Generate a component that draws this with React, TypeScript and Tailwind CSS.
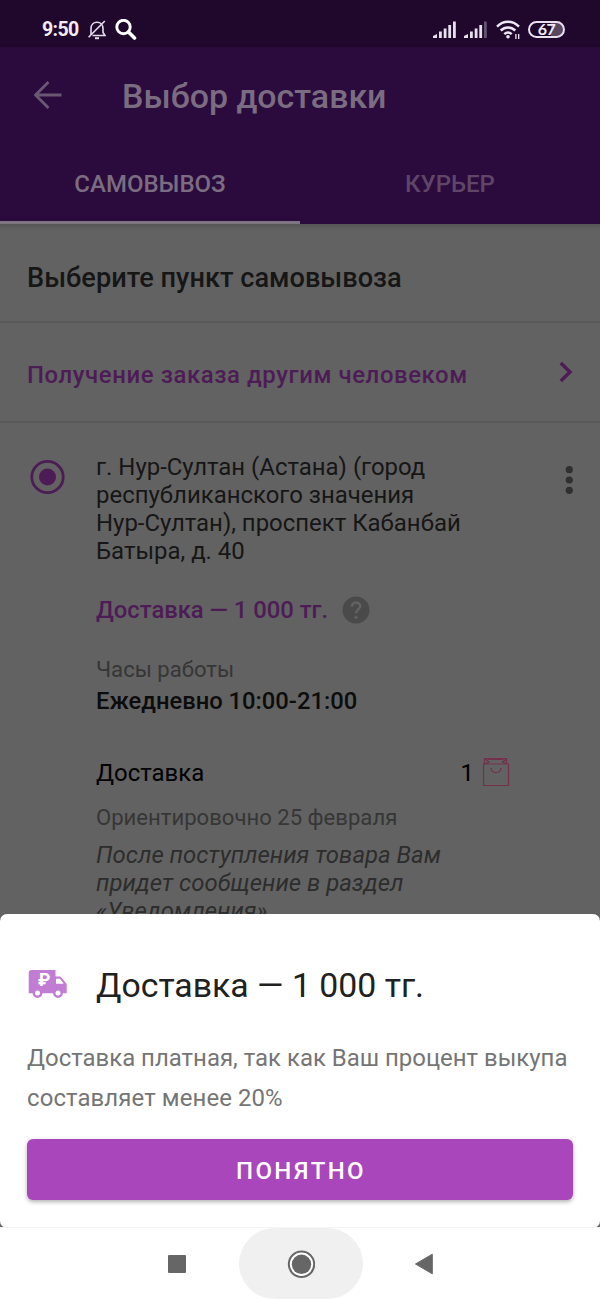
import type { ReactNode } from 'react'

function Line({ className = '', children }: { className?: string; children: ReactNode }) {
  return <div className={`whitespace-nowrap ${className}`}>{children}</div>
}

function Signal({ weak }: { weak?: boolean }) {
  return (
    <svg width="23" height="17" viewBox="0 0 23 17" fill="#e9e0ee">
      <path d="M0 17v-2l4-2v4z" />
      <path d="M6 10.5h2.8V17H6z" />
      <path d="M10.7 7.5h2.8V17h-2.8z" />
      <path d="M15.3 4h2.8v13h-2.8z" />
      <path d="M20 .5h2.8V17H20z" opacity={weak ? 0.35 : 1} />
    </svg>
  )
}

function StatusBar() {
  return (
    <div className="flex h-[47px] shrink-0 items-center bg-[#1f082c] pt-3 pl-[42px] text-[#f3ebf7]">
      <span className="w-[46px] pt-[1px] text-[19.5px] leading-[24px] font-bold tracking-[-0.6px]">9:50</span>
      <svg width="18" height="20" viewBox="0 0 18 20" fill="none" stroke="#e5dcea" strokeWidth="1.6">
        <path d="M3 14.8V8.5C3 4.8 5.5 2.2 9 2.2s6 2.6 6 6.3v4l2 3H4.5" />
        <path d="M.6 17.2L16.8 1" />
        <path d="M7 18.2h4" strokeWidth="2" />
      </svg>
      <svg className="ml-[9px]" width="22" height="22" viewBox="0 0 22 22" fill="none" stroke="#fff">
        <circle cx="8.5" cy="8" r="6.7" strokeWidth="2.9" />
        <path d="M13.5 13l6 6" strokeWidth="3.6" strokeLinecap="round" />
      </svg>
      <div className="ml-[296px] flex items-center">
        <Signal />
        <div className="w-[8px]" />
        <Signal weak />
        <svg className="ml-[9px]" width="25" height="20" viewBox="0 0 25 20" fill="none" stroke="#efe6f3" strokeWidth="2.5">
          <path d="M1 6.6C7.5.2 16.5.2 23 6.6" />
          <path d="M4.7 10.5C9 6.4 15 6.4 19.3 10.5" />
          <path d="M8.3 14.2c2.2-2 5.2-2 7.4 0" />
          <circle cx="12" cy="16.7" r="1.8" fill="#efe6f3" stroke="none" />
          <path d="M19.9 14v5M22.7 14v5" strokeWidth="1.3" />
        </svg>
        <div className="ml-[7px] flex h-[17px] w-[37px] items-center justify-center rounded-full border-2 border-[#e9e0ee] bg-linear-to-r from-[#1f082c] from-65% to-[#5a4863] to-65%">
          <span className="pb-[2px] font-['Lato'] text-[16px] leading-none font-bold tracking-[-0.5px]">67</span>
        </div>
      </div>
    </div>
  )
}

function AppBar() {
  return (
    <header className="flex h-[177px] shrink-0 flex-col bg-[#2b0b3d] text-[#7b6d81]">
      <div className="flex h-[98px] items-center pl-[34px]">
        <svg className="-mt-[2px]" width="28" height="28" viewBox="0 0 28 28" fill="none" stroke="#6a5773" strokeWidth="2.8">
          <path d="M27.5 14h-25M14.5 1l-13 13 13 13" />
        </svg>
        <Line className="ml-[60px] pt-[2px] text-[33.9px] font-medium">Выбор доставки</Line>
      </div>
      <div className="flex flex-1 text-[24px] font-medium">
        <div className="flex w-1/2 items-center justify-center border-b-[3px] border-[#7d7582] pt-[2px]">САМОВЫВОЗ</div>
        <div className="flex w-1/2 items-center justify-center border-b-[3px] border-transparent pt-[2px] text-[#5f4668]">
          КУРЬЕР
        </div>
      </div>
    </header>
  )
}

function BagIcon() {
  return (
    <svg className="-mt-[2px]" width="28" height="30" viewBox="0 0 28 30" fill="none" stroke="#74304a" strokeWidth="1.2">
      <path d="M1.5 7h25v21.5h-25zM2.5 7V1.5h22V7M3 2l4 3-4 2M24.5 2l-4 3 4 2M5.5 2.5h16" />
      <path d="M9 11c.5 6 9.5 6 10 0" />
    </svg>
  )
}

function PickupPoint() {
  return (
    <div className="flex pt-[30px]">
      <svg className="mt-[6px] ml-[29px] shrink-0" width="36" height="36" viewBox="0 0 36 36">
        <circle cx="18.5" cy="18" r="15.7" fill="none" stroke="#4d1c56" strokeWidth="2.8" />
        <circle cx="18.5" cy="18" r="8.5" fill="#4d1c56" />
      </svg>
      <div className="ml-[31px] w-[414px] shrink-0 text-[23.95px]">
        <div className="leading-[28px] text-[#161616]">
          <Line>г. Нур-Султан (Астана) (город</Line>
          <Line>республиканского значения</Line>
          <Line>Нур-Султан), проспект Кабанбай</Line>
          <Line>Батыра, д. 40</Line>
        </div>
        <div className="mt-[30px] flex h-[30px] items-center text-[#4d1c56]">
          <Line className="pt-[2px] text-[23.8px] font-medium">Доставка — 1 000 тг.</Line>
          <svg className="ml-[14px]" width="28" height="28" viewBox="0 0 28 28">
            <circle cx="14" cy="14" r="13.5" fill="#4a4a4a" />
            <path d="M9.8 10.7c0-5.4 8.4-5.4 8.4-.4 0 3.1-4.2 3.2-4.2 7" fill="none" stroke="#626262" strokeWidth="2.5" />
            <circle cx="14" cy="21.3" r="1.6" fill="#626262" />
          </svg>
        </div>
        <Line className="mt-[29px] text-[22.1px] leading-[30px] text-[#363636]">Часы работы</Line>
        <Line className="mt-[2px] text-[23.75px] leading-[30px] font-medium text-[#0c0c0c]">Ежедневно 10:00-21:00</Line>
        <div className="mt-[42px] flex h-[30px] items-center justify-between text-black">
          <Line className="pt-[1px]">Доставка</Line>
          <div className="flex items-center gap-[8px]">
            <span className="pt-[1px]">1</span>
            <BagIcon />
          </div>
        </div>
        <Line className="mt-[14px] text-[22.1px] leading-[30px] text-[#363636]">Ориентировочно 25 февраля</Line>
        <div className="mt-[9px] leading-[28px] text-[#2d2d2d] italic">
          <Line>После поступления товара Вам</Line>
          <Line>придет сообщение в раздел</Line>
          <Line>«Уведомления»</Line>
        </div>
      </div>
      <svg className="mt-[12px] ml-[54px] shrink-0" width="10" height="30" viewBox="0 0 10 30" fill="#303030">
        <circle cx="5.3" cy="4.7" r="3.6" />
        <circle cx="5.3" cy="15" r="3.6" />
        <circle cx="5.3" cy="25.3" r="3.6" />
      </svg>
    </div>
  )
}

function TruckIcon() {
  return (
    <svg className="shrink-0" width="40" height="30" viewBox="0 0 40 30">
      <path d="M5 0h23.5v6.500h5L39.700 14v9.300H1.700V3.300A3.300 3.300 0 0 1 5 0z" fill="#c07dd3" />
      <path d="M29 8.800h4l3.700 5H29z" fill="#fff" />
      <circle cx="10.5" cy="23" r="3.7" fill="#fff" stroke="#c07dd3" strokeWidth="2.4" />
      <circle cx="31" cy="23" r="3.7" fill="#fff" stroke="#c07dd3" strokeWidth="2.4" />
      <text x="17.3" y="16" textAnchor="middle" fill="#fff" fontSize="17.5" fontWeight="700">
        ₽
      </text>
    </svg>
  )
}

function BottomSheet() {
  return (
    <section className="h-[314px] shrink-0 rounded-[7px] bg-white px-[27px] pt-[47px]">
      <div className="flex h-[48px] items-center">
        <TruckIcon />
        <Line className="ml-[29px] pt-[2px] text-[33.8px] text-[#212121]">Доставка — 1 000 тг.</Line>
      </div>
      <div className="mt-[29px] text-[23.95px] leading-[40px] text-[#757575]">
        <Line>Доставка платная, так как Ваш процент выкупа</Line>
        <Line className="tracking-[0.1px]">составляет менее 20%</Line>
      </div>
      <button
        type="button"
        className="mt-[21px] flex h-[61px] w-full items-center justify-center rounded-[6px] bg-[#aa46bc] pt-[3px] pl-[2px] text-[24px] font-medium tracking-[2.4px] text-white shadow-[0_2px_4px_rgba(0,0,0,0.3)]"
      >
        ПОНЯТНО
      </button>
    </section>
  )
}

function NavBar() {
  return (
    <nav className="flex h-[71px] shrink-0 items-center bg-white shadow-[0_-1px_0_#f4f4f4]">
      <div className="ml-[168px] h-[18px] w-[18px] rounded-[1px] bg-[#666]" />
      <div className="ml-[53px] flex h-[71px] w-[124px] items-center justify-center rounded-full bg-[#f0f0f0]">
        <svg width="28" height="28" viewBox="0 0 28 28">
          <circle cx="14.5" cy="14.3" r="12.7" fill="#fff" stroke="#666" strokeWidth="2" />
          <circle cx="14.5" cy="14.3" r="9.7" fill="#666" />
        </svg>
      </div>
      <svg className="ml-[51px]" width="20" height="22" viewBox="0 0 20 22" fill="#666">
        <path d="M18.3 1.2v19.6L1.5 11z" stroke="#666" strokeLinejoin="round" />
      </svg>
    </nav>
  )
}

export default function App() {
  return (
    <div className="flex h-[1299px] w-[600px] flex-col overflow-hidden bg-[#626262] font-['Roboto',sans-serif]">
      <StatusBar />
      <AppBar />
      <main className="h-[690px] shrink-0 overflow-hidden bg-linear-to-b from-[#555] to-[#626262] to-[6px]">
        <div className="flex h-[99px] items-center border-b-2 border-[#595959] pt-[11px] pl-[27px]">
          <Line className="text-[27.2px] font-medium text-[#161616]">Выберите пункт самовывоза</Line>
        </div>
        <div className="flex h-[100px] items-center border-b-2 border-[#595959] pl-[27px]">
          <Line className="w-[530px] pt-[8px] text-[23.9px] font-medium tracking-[0.6px] text-[#4d1c56]">
            Получение заказа другим человеком
          </Line>
          <svg width="18" height="22" viewBox="0 0 18 22" fill="none" stroke="#4d1c56" strokeWidth="3.4">
            <path d="M3.8 2l9.2 9-9.2 9" />
          </svg>
        </div>
        <PickupPoint />
      </main>
      <BottomSheet />
      <NavBar />
    </div>
  )
}
